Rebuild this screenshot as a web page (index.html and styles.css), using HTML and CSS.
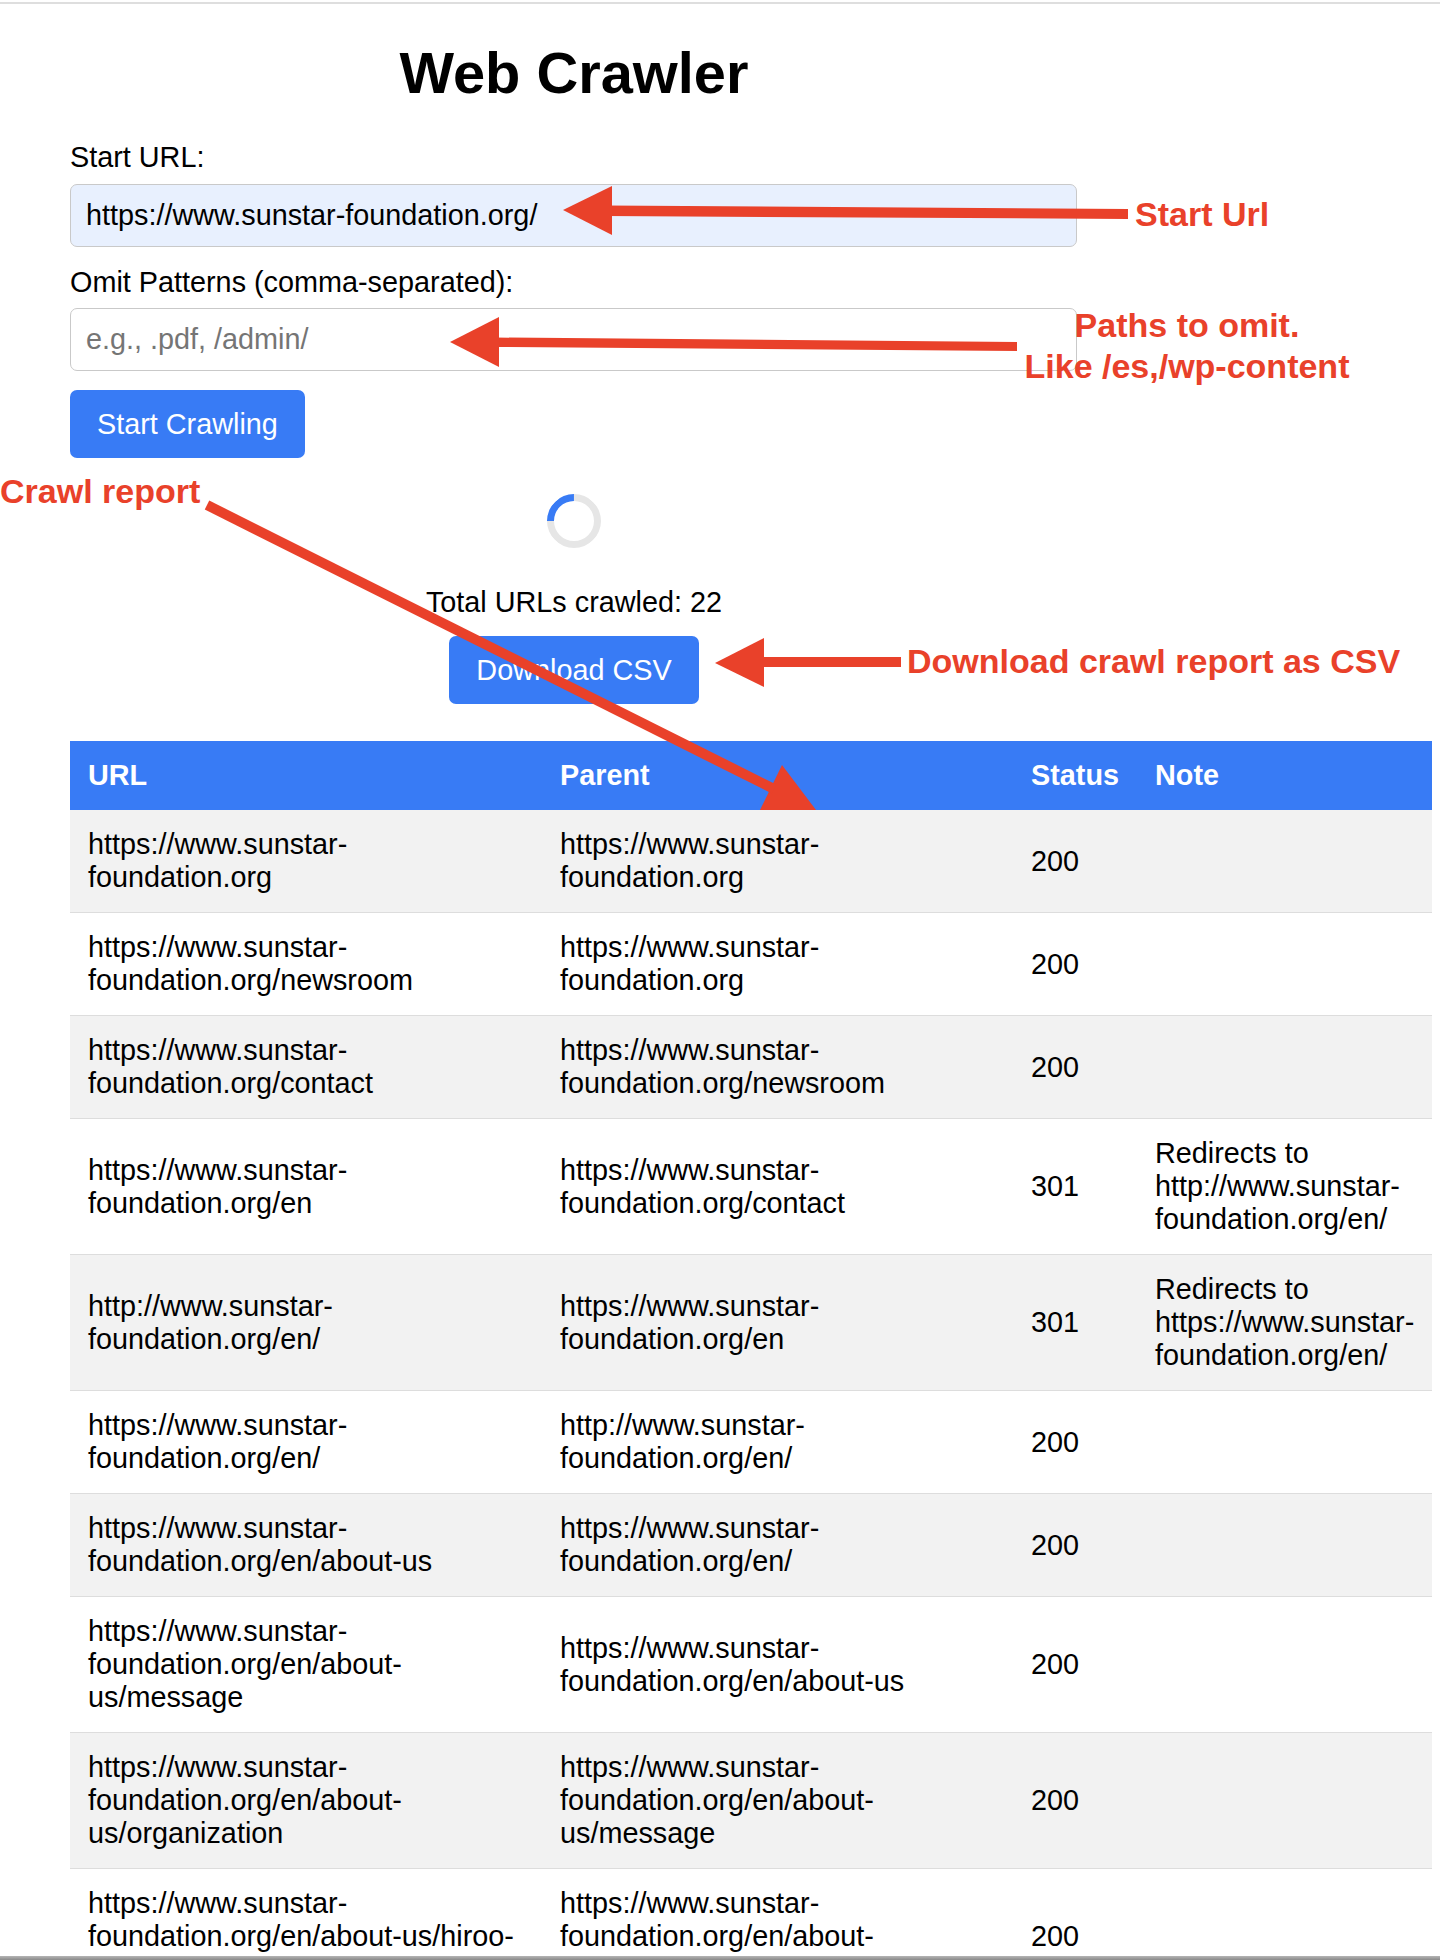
FILE: index.html
```html
<!DOCTYPE html>
<html lang="en">
<head>
<meta charset="utf-8">
<title>Web Crawler</title>
<link rel="stylesheet" href="styles.css">
</head>
<body>
<div class="page">
  <div class="topline"></div>
  <main class="content">
    <div class="app">
      <h1 class="title">Web Crawler</h1>
      <label class="field-label" for="start">Start URL:</label>
      <input class="field field-filled" id="start" type="text" value="https://www.sunstar-foundation.org/">
      <label class="field-label field-label-second" for="omit">Omit Patterns (comma-separated):</label>
      <input class="field field-second" id="omit" type="text" placeholder="e.g., .pdf, /admin/">
      <button class="btn btn-start" type="button">Start Crawling</button>
      <div class="spinner"></div>
      <p class="total">Total URLs crawled: 22</p>
      <button class="btn btn-download" type="button">Download CSV</button>
    </div>
    <table class="report">
      <colgroup>
        <col class="col-url"><col class="col-parent"><col class="col-status"><col class="col-note">
      </colgroup>
      <thead>
        <tr><th>URL</th><th>Parent</th><th>Status</th><th>Note</th></tr>
      </thead>
      <tbody>
        <tr><td>https://www.sunstar-foundation.org</td><td>https://www.sunstar-foundation.org</td><td>200</td><td></td></tr>
        <tr><td>https://www.sunstar-foundation.org/newsroom</td><td>https://www.sunstar-foundation.org</td><td>200</td><td></td></tr>
        <tr><td>https://www.sunstar-foundation.org/contact</td><td>https://www.sunstar-foundation.org/newsroom</td><td>200</td><td></td></tr>
        <tr><td>https://www.sunstar-foundation.org/en</td><td>https://www.sunstar-foundation.org/contact</td><td>301</td><td>Redirects to http://www.sunstar-foundation.org/en/</td></tr>
        <tr><td>http://www.sunstar-foundation.org/en/</td><td>https://www.sunstar-foundation.org/en</td><td>301</td><td>Redirects to https://www.sunstar-foundation.org/en/</td></tr>
        <tr><td>https://www.sunstar-foundation.org/en/</td><td>http://www.sunstar-foundation.org/en/</td><td>200</td><td></td></tr>
        <tr><td>https://www.sunstar-foundation.org/en/about-us</td><td>https://www.sunstar-foundation.org/en/</td><td>200</td><td></td></tr>
        <tr><td>https://www.sunstar-foundation.org/en/about-us/message</td><td>https://www.sunstar-foundation.org/en/about-us</td><td>200</td><td></td></tr>
        <tr><td>https://www.sunstar-foundation.org/en/about-us/organization</td><td>https://www.sunstar-foundation.org/en/about-us/message</td><td>200</td><td></td></tr>
        <tr><td>https://www.sunstar-foundation.org/en/about-us/hiroo-kaneda</td><td>https://www.sunstar-foundation.org/en/about-us/message</td><td>200</td><td></td></tr>
      </tbody>
    </table>
  </main>
  <div class="bottomline"></div>

  <svg class="annotations" width="1440" height="1960" viewBox="0 0 1440 1960" aria-hidden="true">
    <g fill="#e9412a">
      <polygon points="605,205.5 1128,209 1128,219 605,216"/>
      <polygon points="563,210 612,186 612,235"/>
      <polygon points="495,337.5 1017,342 1017,351 495,347"/>
      <polygon points="450,342 499,317 499,367"/>
      <polygon points="760,657 901,657 901,667 760,667"/>
      <polygon points="715,663 764,638 764,687"/>
      <polygon points="782,765 760,810 816,810"/>
    </g>
    <line x1="207" y1="505" x2="774" y2="789" stroke="#e9412a" stroke-width="10"/>
  </svg>
  <div class="anno anno-start">Start Url</div>
  <div class="anno anno-omit">Paths to omit.<br>Like /es,/wp-content</div>
  <div class="anno anno-report">Crawl report</div>
  <div class="anno anno-csv">Download crawl report as CSV</div>
</div>
</body>
</html>
```

FILE: styles.css
```css
* {
  box-sizing: border-box;
}

html, body {
  margin: 0;
  padding: 0;
  background: #ffffff;
}

body {
  font-family: "Liberation Sans", Arial, Helvetica, sans-serif;
  font-size: 28.8px;
  line-height: 33px;
  color: #000000;
}

.page {
  position: relative;
  width: 1440px;
  height: 1960px;
  display: flex;
  flex-direction: column;
  padding-top: 2px;
  overflow: hidden;
}

.topline {
  height: 2px;
  background: #dedede;
  flex: none;
}

.content {
  flex: 1;
  overflow: hidden;
}

.app {
  width: 1008px;
  margin-left: 70px;
  display: flex;
  flex-direction: column;
  align-items: flex-start;
}

.title {
  align-self: stretch;
  text-align: center;
  font-size: 57.8px;
  line-height: 66px;
  font-weight: bold;
  margin: 36px 0 35px;
}

.field-label {
  display: block;
  line-height: 33px;
}

.field-label-second {
  margin-top: 19px;
}

.field {
  display: block;
  width: 1007px;
  height: 63px;
  margin-top: 10px;
  padding: 0 15px;
  border: 1px solid #c9c9c9;
  border-radius: 7px;
  font-family: "Liberation Sans", Arial, Helvetica, sans-serif;
  font-size: 28.8px;
  color: #000000;
  background: #ffffff;
  outline: none;
}

.field-second {
  margin-top: 9px;
}

.field-filled {
  background: #e8f0fe;
}

.field::placeholder {
  color: #757575;
}

.btn {
  display: block;
  border: none;
  border-radius: 7px;
  background: #387bf5;
  color: #ffffff;
  font-family: "Liberation Sans", Arial, Helvetica, sans-serif;
  font-size: 28.8px;
  line-height: 33px;
  padding: 17.5px 27px;
  cursor: pointer;
}

.btn-start {
  margin-top: 19px;
}

.spinner {
  align-self: center;
  width: 54px;
  height: 54px;
  margin-top: 36px;
  border: 7px solid #e6e6e6;
  border-top-color: #387bf5;
  border-radius: 50%;
  transform: rotate(-45deg);
}

.total {
  align-self: center;
  margin: 38px 0 0;
  line-height: 33px;
}

.btn-download {
  align-self: center;
  margin-top: 17px;
}

.report {
  margin: 37px 0 0 70px;
  width: 1362px;
  table-layout: fixed;
  border-collapse: collapse;
}

.col-url { width: 472px; }
.col-parent { width: 471px; }
.col-status { width: 124px; }
.col-note { width: 295px; }

.report th {
  background: #387bf5;
  color: #ffffff;
  font-weight: bold;
  text-align: left;
  padding: 18px;
  line-height: 33px;
  white-space: nowrap;
}

.report td {
  padding: 18px;
  line-height: 33px;
  border-bottom: 1px solid #dddddd;
  vertical-align: middle;
  text-align: left;
}

.report td:nth-child(1),
.report td:nth-child(2) {
  padding-right: 24px;
}

.report td:nth-child(4) {
  padding-right: 8px;
}

.report tbody tr:nth-child(odd) {
  background: #f2f2f2;
}

.bottomline {
  flex: none;
  height: 4px;
  background: linear-gradient(#b5b5b5, #8a8a8a);
}

.annotations {
  position: absolute;
  top: 0;
  left: 0;
  pointer-events: none;
  z-index: 5;
}

.anno {
  position: absolute;
  z-index: 6;
  color: #e9412a;
  font-weight: bold;
  font-size: 34px;
  line-height: 40px;
  white-space: nowrap;
}

.anno-start {
  left: 1135px;
  top: 194px;
}

.anno-omit {
  left: 987px;
  width: 400px;
  top: 305px;
  line-height: 41px;
  text-align: center;
}

.anno-report {
  left: 0;
  top: 471px;
}

.anno-csv {
  left: 907px;
  top: 641px;
}
```
